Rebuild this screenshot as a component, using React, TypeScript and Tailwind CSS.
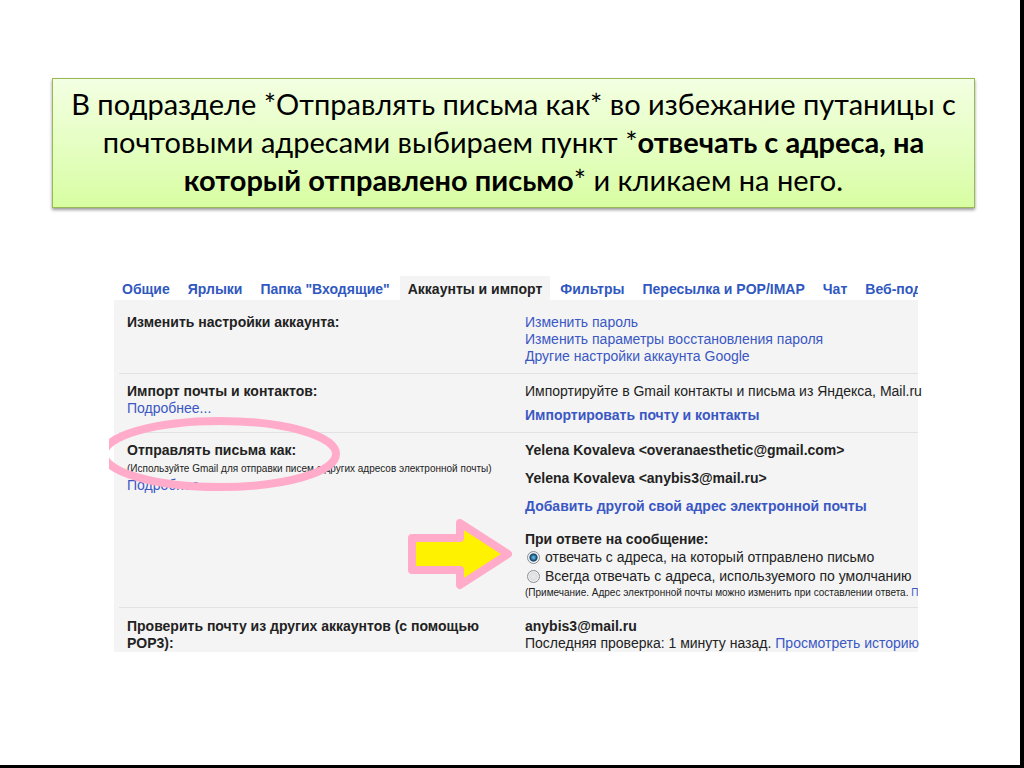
import React from 'react';

const tabs = [
  'Общие',
  'Ярлыки',
  'Папка "Входящие"',
  'Аккаунты и импорт',
  'Фильтры',
  'Пересылка и POP/IMAP',
  'Чат',
  'Веб-под',
];

const activeTab = 'Аккаунты и импорт';

interface LinkProps {
  className?: string;
  children: React.ReactNode;
}

const Link: React.FC<LinkProps> = ({ className = '', children }) => (
  <a href="#" className={`text-[#3a57c4] ${className}`}>
    {children}
  </a>
);

interface RowProps {
  label: React.ReactNode;
  className?: string;
  children: React.ReactNode;
}

const Row: React.FC<RowProps> = ({ label, className = '', children }) => (
  <section className={`ml-[5px] grid grid-cols-[398px_1fr] pl-2 ${className}`}>
    <div className="pr-8">{label}</div>
    <div className="min-w-0 whitespace-nowrap">{children}</div>
  </section>
);

interface ReplyOptionProps {
  id: string;
  label: string;
  defaultChecked?: boolean;
}

const ReplyOption: React.FC<ReplyOptionProps> = ({ id, label, defaultChecked }) => (
  <div className="flex h-[19px] items-center gap-[5px] pl-0.5">
    <input
      id={id}
      type="radio"
      name="reply"
      defaultChecked={defaultChecked}
      className="size-[13px] shrink-0 appearance-none rounded-full border border-[#8a8f94] bg-radial from-[#e9e9e9] to-[#d2d4d6] shadow-[inset_0_0_0_1px_#f4f4f4] checked:from-[#58b4dc] checked:from-10% checked:via-[#123f66] checked:via-45% checked:to-[#e4e8ec] checked:to-60%"
    />
    <label htmlFor={id}>{label}</label>
  </div>
);

export default function App() {
  return (
    <main className="min-h-screen border-r-4 border-b-[3px] border-black bg-white pt-[78px]">
      <h1 className="mr-[45px] ml-[52px] border border-[#98b954] bg-linear-to-b from-[#f3ffe2] to-[#d8fda2] px-4 pt-1.5 pb-2 text-center font-['Lato','Open_Sans',sans-serif] text-[29px] leading-[38px] font-normal text-black shadow-[0_2px_3px_rgba(0,0,0,0.4)]">
        В подразделе *Отправлять письма как* во избежание путаницы с<br />
        почтовыми адресами выбираем пункт *<b>отвечать с адреса, на</b>
        <br />
        <b>который отправлено письмо</b>* и кликаем на него.
      </h1>

      <div className="relative mt-[68px] mr-[102px] ml-[109px] pl-[5px] font-['Liberation_Sans',Arial,sans-serif] text-[14px] leading-[17px] text-[#222]">
        <nav className="flex h-6 gap-0.5 overflow-hidden font-bold whitespace-nowrap">
          {tabs.map((tab) => (
            <a
              key={tab}
              href="#"
              className={`px-2 pt-[5px] ${tab === activeTab ? 'bg-[#f4f4f4] text-[#222]' : 'text-[#3058c0]'}`}
            >
              {tab}
            </a>
          ))}
        </nav>

        <div className="divide-y divide-[#e2e2e2] bg-[#f4f4f4]">
          <Row className="pt-3.5 pb-2" label={<b>Изменить настройки аккаунта:</b>}>
            <Link className="block">Изменить пароль</Link>
            <Link className="block">Изменить параметры восстановления пароля</Link>
            <Link className="block">Другие настройки аккаунта Google</Link>
          </Row>

          <Row
            className="pt-[9px] pb-2"
            label={
              <>
                <b className="block">Импорт почты и контактов:</b>
                <Link>Подробнее...</Link>
              </>
            }
          >
            <p>Импортируйте в Gmail контакты и письма из Яндекса, Mail.ru</p>
            <Link className="mt-[7px] block font-bold">Импортировать почту и контакты</Link>
          </Row>

          <Row
            className="pt-[9px] pb-[7px]"
            label={
              <>
                <b className="block">Отправлять письма как:</b>
                <p className="pt-px text-[10px] whitespace-nowrap">
                  (Используйте Gmail для отправки писем с других адресов электронной почты)
                </p>
                <Link>Подробнее...</Link>
              </>
            }
          >
            <div className="flex flex-col gap-[11px] font-bold">
              <p>Yelena Kovaleva &lt;overanaesthetic@gmail.com&gt;</p>
              <p>Yelena Kovaleva &lt;anybis3@mail.ru&gt;</p>
              <Link>Добавить другой свой адрес электронной почты</Link>
            </div>
            <fieldset className="pt-4">
              <legend className="float-left w-full font-bold">При ответе на сообщение:</legend>
              <ReplyOption id="reply-same" label="отвечать с адреса, на который отправлено письмо" defaultChecked />
              <ReplyOption id="reply-default" label="Всегда отвечать с адреса, используемого по умолчанию" />
            </fieldset>
            <p className="overflow-hidden text-[10px] leading-[14px]">
              (Примечание. Адрес электронной почты можно изменить при составлении ответа. <Link>По</Link>
            </p>
          </Row>

          <Row className="pt-2.5" label={<b>Проверить почту из других аккаунтов (с помощью POP3):</b>}>
            <b className="block">anybis3@mail.ru</b>
            <p>
              Последняя проверка: 1 минуту назад. <Link>Просмотреть историю</Link>
            </p>
          </Row>
        </div>

        {/* Hand-drawn marks over the settings */}
        <svg className="pointer-events-none absolute top-0 left-0" width="420" height="374" aria-hidden="true">
          <ellipse cx="111" cy="178" rx="116" ry="33" fill="none" stroke="#ffabc9" strokeWidth="8" />
          <polygon
            points="303,262 351,262 351,247 399,278 351,309 351,294 303,294"
            fill="#fff200"
            stroke="#ffabc9"
            strokeWidth="8"
            strokeLinejoin="round"
          />
        </svg>
      </div>
    </main>
  );
}
